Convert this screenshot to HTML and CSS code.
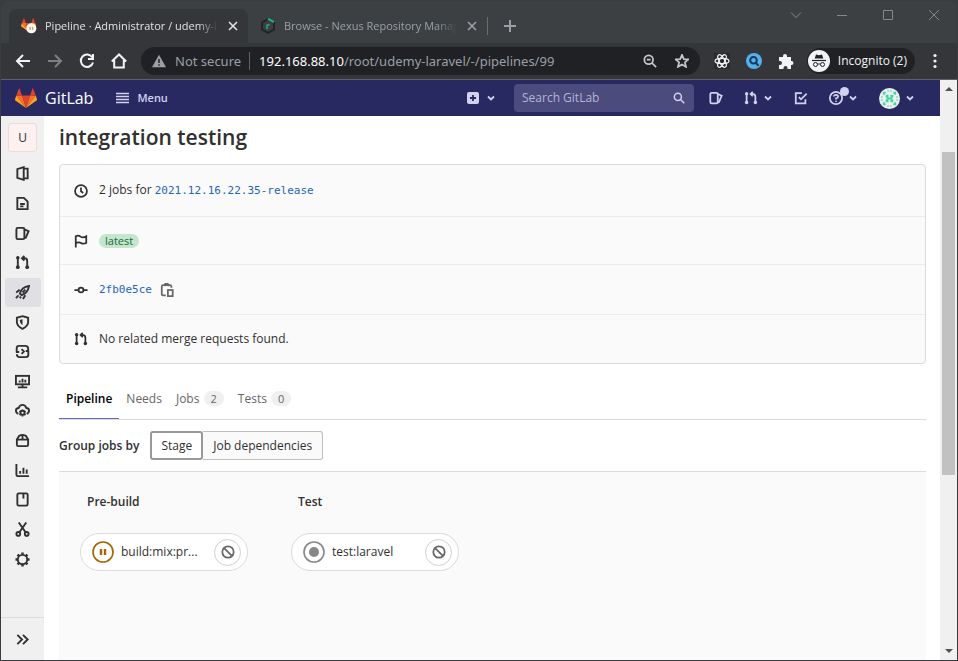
FILE: index.html
```html
<!DOCTYPE html>
<html lang="en">
<head>
<meta charset="utf-8">
<meta name="viewport" content="width=device-width, initial-scale=1">
<title>Pipeline · Administrator / udemy-laravel</title>
<link rel="stylesheet" href="styles.css">
</head>
<body>
<svg class="sprite" aria-hidden="true">
  <symbol id="tanuki" viewBox="0 0 22 20"><path fill="#e24329" d="M11 20 7 7.500h8z"/><path fill="#fc6d26" d="M11 20 7 7.500H1.300zM11 20l4-12.500h5.700z"/><path fill="#fca326" d="M1.300 7.500 0 11.300q-.2.700.4 1.200L11 20zM20.700 7.500l1.300 3.800q.2.700-.4 1.200L11 20z"/><path fill="#e24329" d="M1.300 7.500H7L4.500.400q-.3-.6-.6 0zM20.700 7.500H15l2.500-7.100q.3-.6.600 0z"/></symbol>
  <symbol id="chevron" viewBox="0 0 10 10"><path d="m2 3.500 3 3 3-3" stroke-width="1.800"/></symbol>
  <symbol id="close" viewBox="0 0 10 10"><path d="m1 1 8 8M9 1 1 9" stroke-width="1.600"/></symbol>
  <symbol id="project" viewBox="0 0 16 16"><path d="M9.300 1.200v13.600L2.500 12.700V3.300zM9.300 2.800h4.200v10.400H9.300"/></symbol>
  <symbol id="document" viewBox="0 0 16 16"><path d="M2.500 2h7l4 4v8h-11zM5.500 8.500h5M5.500 11h3.500"/></symbol>
  <symbol id="issues" viewBox="0 0 16 16"><rect x="1.500" y="2" width="8.500" height="12" rx="1.500"/><path d="m10 3.500 4.500 2-3 7-1.500.5"/></symbol>
  <symbol id="merge" viewBox="0 0 16 16"><path d="M3 3v10M8 3.500h2.500q2.500 0 2.500 3V13M10 1 7.500 3.500 10 6"/><g fill="currentColor" stroke="none"><circle cx="3" cy="3" r="1.900"/><circle cx="3" cy="13" r="2"/><circle cx="13" cy="13" r="2"/></g></symbol>
  <symbol id="rocket" viewBox="0 0 16 16"><path d="M5.200 9Q7 2.500 15 1q-1.500 8-8 9.800zM5 5 1.300 8M3.800 11 1 14M11 11l-2.500 4M6.500 12.500 5 14M8 8l3-3"/></symbol>
  <symbol id="shield" viewBox="0 0 16 16"><path d="M8 1.300 14 3v4.500q0 4.500-6 7.200-6-2.700-6-7.200V3z"/><path d="M8 4.500v6.500Q5 9 5 5.300z" fill="currentColor" stroke="none"/></symbol>
  <symbol id="deploy" viewBox="0 0 16 16"><path d="M1.800 9V4.500Q1.800 2 4.300 2H11q3 0 3 3v1.500M14.200 7v4.500q0 2.500-2.500 2.500H5q-3 0-3-3M1 8.500h3.500M11.500 7.500H15M7 5.500 9.500 8 7 10.500"/></symbol>
  <symbol id="monitor" viewBox="0 0 16 16"><rect x="1" y="2" width="14" height="9"/><path d="M3 14.200h10M8 11v3M5 7v2M8 5v4M11 6v3"/></symbol>
  <symbol id="cloud" viewBox="0 0 16 16"><path d="M3.500 11.500Q1 10.500 1 8q0-2.500 3-2.700Q5 2 8 2t4 3.300Q15 5.500 15 8t-2.500 3.500"/><circle cx="8" cy="10.500" r="2.200"/><path d="M8 7v1M8 13v1.500M4.800 8.500l1 .8M10.200 12l1 .8M11.200 8.500l-1 .8M5.800 12l-1 .8"/></symbol>
  <symbol id="package" viewBox="0 0 16 16"><path d="M2 7v5.500q0 1.500 1.500 1.500h9q1.500 0 1.500-1.500V7zM2 7l2.500-4Q8 1 11.500 3L14 7M8 2v4"/></symbol>
  <symbol id="chart" viewBox="0 0 16 16"><path d="M1.500 1v11.500q0 1.500 1.500 1.500h12M5.500 8.500v3M9 5v6.500M12.500 7v4.500"/></symbol>
  <symbol id="book" viewBox="0 0 16 16"><rect x="2.500" y="1.500" width="11" height="13" rx="1.500"/><path d="M9 2v5"/></symbol>
  <symbol id="scissors" viewBox="0 0 16 16"><path d="m4 .5 7.500 10.700M12 .5 4.500 11.200"/><circle cx="3.500" cy="12.700" r="2"/><circle cx="12.500" cy="12.700" r="2"/></symbol>
  <symbol id="gear" viewBox="0 0 16 16"><circle cx="8" cy="8" r="5"/><path stroke-width="2.600" d="M8 .5v2.200M8 13.300v2.200M.5 8h2.200M13.300 8h2.200M2.700 2.700l1.500 1.500M11.800 11.800l1.500 1.500M13.300 2.700l-1.500 1.500M4.200 11.800l-1.500 1.500"/></symbol>
  <symbol id="double" viewBox="0 0 16 16"><path d="m2.500 3 5 5-5 5M8.500 3l5 5-5 5"/></symbol>
  <symbol id="clock" viewBox="0 0 16 16"><circle cx="8" cy="8" r="6.800"/><path d="M8 4v4.300l2.500 2"/></symbol>
  <symbol id="flag" viewBox="0 0 16 16"><path d="M2 15.500V2.500Q5 1 7.500 3t6.500-.3v7.500q-3.500 1.600-6 0T2 10.500"/></symbol>
  <symbol id="commit" viewBox="0 0 16 16"><circle cx="8" cy="8" r="2.800"/><path d="M.5 8H5M11 8h4.500"/></symbol>
  <symbol id="copy" viewBox="0 0 16 16"><path d="M6.500 14H3.500Q2 14 2 12.500V4q0-1.500 1.500-1.500h8Q13 2.500 13 4v1.500M5 3.500 6 1h3l1 2.500"/><rect x="9" y="8" width="5.500" height="7"/></symbol>
  <symbol id="cancel" viewBox="0 0 16 16"><circle cx="8" cy="8" r="6.500"/><path d="m3.500 3.500 9 9"/></symbol>
  <symbol id="search" viewBox="0 0 16 16"><circle cx="6.500" cy="6.500" r="4.700"/><path d="m10 10 5 5"/></symbol>
  <symbol id="zoomout" viewBox="0 0 16 16"><circle cx="6.500" cy="6.500" r="5"/><path d="m10 10 5 5M4.300 6.500h4.400"/></symbol>
</svg>

<div class="window">
  <div class="tabstrip">
    <div class="tab tab-active">
      <svg class="favicon" viewBox="0 0 17 17"><svg width="16" height="14.500"><use href="#tanuki"/></svg><circle cx="11" cy="11" r="5.300" fill="#fff"/><path d="M9.700 9.300v3.400M12.300 9.300v3.400" stroke="#f29a4a" stroke-width="1.500"/></svg>
      <span class="tab-title">Pipeline · Administrator / udemy-laravel</span>
      <button class="tab-close" aria-label="Close tab"><svg class="icon icon-xs"><use href="#close"/></svg></button>
    </div>
    <div class="tab">
      <svg class="favicon" viewBox="0 0 16 16" fill="none"><path d="M8 1.200 14 4.500v7L8 14.800 2 11.500v-7z" stroke="#20242b" stroke-width="2"/><path d="m8 .8 6 3.400" stroke="#21b573" stroke-width="2"/><path d="M7 11V6.500M7 8q.5-1.500 2.500-1.300" stroke="#21b573" stroke-width="1.400"/></svg>
      <span class="tab-title">Browse - Nexus Repository Manager</span>
      <button class="tab-close" aria-label="Close tab"><svg class="icon icon-xs"><use href="#close"/></svg></button>
    </div>
    <button class="new-tab" aria-label="New tab"><svg class="icon icon-sm" viewBox="0 0 12 12"><path d="M6 0v12M0 6h12" stroke-width="2"/></svg></button>
    <div class="window-controls">
      <button aria-label="Search tabs"><svg class="icon icon-sm" viewBox="0 0 12 12"><path d="m1 3.500 5 5 5-5" stroke-width="1"/></svg></button>
      <button aria-label="Minimize"><svg class="icon icon-sm" viewBox="0 0 12 12"><path d="M1 6.500h10" stroke-width="1"/></svg></button>
      <button aria-label="Maximize"><svg class="icon icon-sm" viewBox="0 0 12 12"><path d="M1.500 1.500h9v9h-9z" stroke-width="1"/></svg></button>
      <button aria-label="Close"><svg class="icon icon-sm" viewBox="0 0 12 12"><path d="m1 1 10 10M11 1 1 11" stroke-width="1"/></svg></button>
    </div>
  </div>

  <div class="toolbar">
    <button aria-label="Back"><svg class="icon icon-lg" viewBox="0 0 16 16"><path d="M15 8H2M8 2 2 8l6 6" stroke-width="2"/></svg></button>
    <button class="disabled" aria-label="Forward"><svg class="icon icon-lg" viewBox="0 0 16 16"><path d="M1 8h13M8 2l6 6-6 6" stroke-width="2"/></svg></button>
    <button aria-label="Reload"><svg class="icon icon-lg" viewBox="0 0 16 16"><path d="M13.200 4.300A6.200 6.200 0 1 0 14 9.500M14 1v5H9" stroke-width="2"/></svg></button>
    <button aria-label="Home"><svg class="icon icon-lg" viewBox="0 0 16 16"><path d="M.8 8.500 8 1.500l7.200 7M3.200 7v7.500h9.600V7" stroke-width="2"/></svg></button>
    <div class="address">
      <svg class="icon-md" viewBox="0 0 14 14"><path d="M7 .8 14 13.200H0z" fill="#9aa0a6"/><path d="M7 5v4M7 10.200v1.500" stroke="#202124" stroke-width="1.500"/></svg>
      <span class="security">Not secure</span>
      <span class="url"><b>192.168.88.10</b>/root/udemy-laravel/-/pipelines/99</span>
      <button aria-label="Zoom"><svg class="icon icon-md"><use href="#zoomout"/></svg></button>
      <button aria-label="Bookmark"><svg class="icon icon-md" viewBox="0 0 16 16"><path d="m8 1 2.100 4.800 5.200.4-4 3.400 1.300 5.100L8 12l-4.600 2.700 1.300-5.100-4-3.400 5.200-.4z"/></svg></button>
    </div>
    <div class="extensions">
      <button aria-label="React tools"><svg class="icon icon-lg" viewBox="0 0 16 16"><rect width="16" height="16" fill="#292a2d" stroke="none"/><g stroke-width="1.200"><ellipse cx="8" cy="8" rx="7" ry="2.700"/><ellipse cx="8" cy="8" rx="7" ry="2.700" transform="rotate(60 8 8)"/><ellipse cx="8" cy="8" rx="7" ry="2.700" transform="rotate(120 8 8)"/></g></svg></button>
      <button aria-label="Search extension"><svg class="icon icon-lg" viewBox="0 0 16 16"><circle cx="8" cy="8" r="8" fill="#55b0eb" stroke="none"/><circle cx="7.500" cy="7.300" r="3.300" stroke="#17395a"/><path d="m10 10 2.500 2.800" stroke="#17395a"/></svg></button>
      <button aria-label="Extensions"><svg class="icon-lg" viewBox="0 0 16 16"><path fill="#f1f3f4" d="M1 4h4V3a2 2 0 0 1 4 0v1h4v4h.5a2 2 0 0 1 0 4H13v4H9.500v-1a2 2 0 0 0-4 0v1H1v-4h1a2 2 0 0 0 0-4H1z"/></svg></button>
    </div>
    <button class="incognito"><svg class="incognito-mark" viewBox="0 0 22 22" fill="none" stroke="#202124"><circle cx="11" cy="11" r="11" fill="#f1f3f4" stroke="none"/><path fill="#202124" stroke="none" d="m8 4.500 3 .7 3-.7 1.300 4H6.700z"/><path d="M4 10.500h14" stroke-width="1.200"/><circle cx="7.500" cy="14.500" r="2"/><circle cx="14.500" cy="14.500" r="2"/><path d="M9.500 14h3"/></svg>Incognito (2)</button>
    <button aria-label="Browser menu"><svg class="icon-lg" viewBox="0 0 16 16" fill="#f1f3f4"><circle cx="8" cy="2.500" r="1.600"/><circle cx="8" cy="8" r="1.600"/><circle cx="8" cy="13.500" r="1.600"/></svg></button>
  </div>

  <div class="viewport">
    <div class="page">
      <header class="navbar">
        <a class="brand" href="#"><svg class="tanuki"><use href="#tanuki"/></svg>GitLab</a>
        <button class="menu"><svg class="icon icon-md" viewBox="0 0 14 14"><path d="M0 2.500h13M0 5.500h13M0 8.500h13M0 11.500h13" stroke-width="1.400"/></svg>Menu</button>
        <button class="nav-create" aria-label="Create new"><svg class="icon-sm" viewBox="0 0 12 12"><rect width="12" height="12" rx="2" fill="#d1d1f0"/><path d="M6 3v6M3 6h6" stroke="#292961" stroke-width="1.800"/></svg><svg class="icon icon-xs"><use href="#chevron"/></svg></button>
        <div class="search">
          <input type="search" placeholder="Search GitLab" aria-label="Search GitLab">
          <svg class="icon icon-sm"><use href="#search"/></svg>
        </div>
        <div class="nav-links">
          <button aria-label="Issues"><svg class="icon icon-md"><use href="#issues"/></svg></button>
          <button aria-label="Merge requests"><svg class="icon icon-md"><use href="#merge"/></svg><svg class="icon icon-xs"><use href="#chevron"/></svg></button>
          <button aria-label="To-Do List"><svg class="icon icon-md" viewBox="0 0 16 16"><path d="M9 2.500H2V14h11V9.500M5.500 7 8 9.500 14.500 3"/></svg></button>
          <button class="help" aria-label="Help"><svg class="icon icon-md" viewBox="0 0 16 16"><circle cx="8" cy="8" r="7"/><path d="M5.500 6.300Q5.700 4.300 8 4.300t2.400 2Q10.400 8 8 8.500v1.200M8 11v1.500"/></svg><svg class="icon icon-xs"><use href="#chevron"/></svg></button>
          <button class="user" aria-label="Profile"><svg class="avatar" viewBox="0 0 22 22"><circle cx="11" cy="11" r="11" fill="#eee"/><g fill="#3ed7a2"><path d="M7 7h3v3h2V7h3v3h-1v2h1v3h-3v-3h-2v3H7v-3h1v-2H7zM4 4h3v2H6v1H4zM15 4h3v3h-2V6h-1zM4 15h2v1h1v2H4zM16 15h2v3h-3v-2h1zM9 2h1v2H9zM12 2h1v2h-1zM9 18h1v2H9zM12 18h1v2h-1zM2 9h2v1H2zM18 9h2v1h-2zM2 12h2v1H2zM18 12h2v1h-2z"/></g></svg><svg class="icon icon-xs"><use href="#chevron"/></svg></button>
        </div>
      </header>

      <div class="body">
        <nav class="sidebar" aria-label="Project">
          <a class="project-avatar" href="#">U</a>
          <ul>
            <li><a href="#" aria-label="Project information"><svg class="icon icon-nav"><use href="#project"/></svg></a></li>
            <li><a href="#" aria-label="Repository"><svg class="icon icon-nav"><use href="#document"/></svg></a></li>
            <li><a href="#" aria-label="Issues"><svg class="icon icon-nav"><use href="#issues"/></svg></a></li>
            <li><a href="#" aria-label="Merge requests"><svg class="icon icon-nav"><use href="#merge"/></svg></a></li>
            <li><a class="active" href="#" aria-label="CI/CD"><svg class="icon icon-nav"><use href="#rocket"/></svg></a></li>
            <li><a href="#" aria-label="Security"><svg class="icon icon-nav"><use href="#shield"/></svg></a></li>
            <li><a href="#" aria-label="Deployments"><svg class="icon icon-nav"><use href="#deploy"/></svg></a></li>
            <li><a href="#" aria-label="Monitor"><svg class="icon icon-nav"><use href="#monitor"/></svg></a></li>
            <li><a href="#" aria-label="Infrastructure"><svg class="icon icon-nav"><use href="#cloud"/></svg></a></li>
            <li><a href="#" aria-label="Packages"><svg class="icon icon-nav"><use href="#package"/></svg></a></li>
            <li><a href="#" aria-label="Analytics"><svg class="icon icon-nav"><use href="#chart"/></svg></a></li>
            <li><a href="#" aria-label="Wiki"><svg class="icon icon-nav"><use href="#book"/></svg></a></li>
            <li><a href="#" aria-label="Snippets"><svg class="icon icon-nav"><use href="#scissors"/></svg></a></li>
            <li><a href="#" aria-label="Settings"><svg class="icon icon-nav"><use href="#gear"/></svg></a></li>
          </ul>
          <button class="expand" aria-label="Expand sidebar"><svg class="icon icon-nav"><use href="#double"/></svg></button>
        </nav>

        <main>
          <h1>integration testing</h1>
          <div class="info">
            <div class="info-row"><svg class="icon icon-md"><use href="#clock"/></svg><span>2 jobs for <a class="ref" href="#">2021.12.16.22.35-release</a></span></div>
            <div class="info-row"><svg class="icon icon-md"><use href="#flag"/></svg><span class="badge-latest">latest</span></div>
            <div class="info-row"><svg class="icon icon-md"><use href="#commit"/></svg><a class="ref" href="#">2fb0e5ce</a><button class="copy" aria-label="Copy commit SHA"><svg class="icon icon-md"><use href="#copy"/></svg></button></div>
            <div class="info-row"><svg class="icon icon-md"><use href="#merge"/></svg><span>No related merge requests found.</span></div>
          </div>

          <nav class="tabs" aria-label="Pipeline views">
            <a class="current" href="#">Pipeline</a>
            <a href="#">Needs</a>
            <a href="#">Jobs <span class="count">2</span></a>
            <a href="#">Tests <span class="count">0</span></a>
          </nav>

          <div class="grouping">
            <span class="grouping-label" id="group-label">Group jobs by</span>
            <div class="segmented" role="group" aria-labelledby="group-label">
              <button class="selected">Stage</button>
              <button>Job dependencies</button>
            </div>
          </div>

          <div class="graph">
            <section class="stage">
              <h2>Pre-build</h2>
              <div class="job">
                <svg class="status" viewBox="0 0 22 22" fill="none" stroke="#ab6100"><circle cx="11" cy="11" r="10" stroke-width="1.600"/><path d="M9 8v6M13 8v6" stroke-width="2.400"/></svg>
                <a href="#">build:mix:pr...</a>
                <button class="cancel" aria-label="Cancel job"><svg class="icon icon-md"><use href="#cancel"/></svg></button>
              </div>
            </section>
            <section class="stage">
              <h2>Test</h2>
              <div class="job">
                <svg class="status" viewBox="0 0 22 22" fill="none" stroke="#868686"><circle cx="11" cy="11" r="10" stroke-width="1.600"/><circle cx="11" cy="11" r="5" fill="#868686" stroke="none"/></svg>
                <a href="#">test:laravel</a>
                <button class="cancel" aria-label="Cancel job"><svg class="icon icon-md"><use href="#cancel"/></svg></button>
              </div>
            </section>
          </div>
        </main>
      </div>
    </div>
    <div class="scrollbar" aria-hidden="true">
      <svg class="arrow" viewBox="0 0 8 4"><path d="M0 4h8L4 0z"/></svg>
      <div class="track"><div class="thumb"></div></div>
      <svg class="arrow" viewBox="0 0 8 4"><path d="M0 0h8L4 4z"/></svg>
    </div>
  </div>
</div>
</body>
</html>
```

FILE: styles.css
```css
* { box-sizing: border-box; }

body {
  margin: 0;
  background: #3c3c3e;
  color: #303030;
  font: 12px/18px "Open Sans", "Noto Sans", sans-serif;
}

button {
  display: inline-flex;
  align-items: center;
  justify-content: center;
  padding: 0;
  border: 0;
  background: none;
  color: inherit;
  font: inherit;
}

a { color: inherit; text-decoration: none; }
svg { flex: none; display: block; }

.sprite { position: absolute; width: 0; height: 0; }

.icon { fill: none; stroke: currentColor; stroke-width: 2; }
.icon-xs { width: 10px; height: 10px; }
.icon-sm { width: 12px; height: 12px; }
.icon-md { width: 14px; height: 14px; }
.icon-nav { width: 15px; height: 15px; }
.icon-lg { width: 16px; height: 16px; }

.window {
  display: flex;
  flex-direction: column;
  height: 100vh;
  padding: 1px;
}

/* Browser tab strip */
.tabstrip {
  display: flex;
  align-items: flex-end;
  height: 42px;
  padding-left: 8px;
  border-radius: 8px 8px 0 0;
  background: #3c4043;
  color: #9aa0a6;
  font-size: 11px;
}

.tab {
  display: flex;
  align-items: center;
  width: 239px;
  height: 34px;
  padding: 0 7px 0 12px;
}

.tab-active {
  border-radius: 8px 8px 0 0;
  background: #35363a;
  color: #dfe1e5;
}

.favicon { width: 16px; height: 16px; margin-right: 8px; }

.tab-title {
  flex: 1;
  overflow: hidden;
  white-space: nowrap;
  mask-image: linear-gradient(to right, #000 88%, transparent);
}

.tab-close { width: 16px; margin-left: 7px; }

.new-tab {
  align-self: flex-end;
  width: 44px;
  height: 18px;
  margin-bottom: 8px;
  border-left: 1px solid #6b6e72;
}

.window-controls {
  display: flex;
  align-self: flex-start;
  gap: 34px;
  margin: 8px 17px 0 auto;
  color: #85888b;
}

/* Browser toolbar */
.toolbar {
  display: flex;
  align-items: center;
  gap: 16px;
  height: 37px;
  padding: 0 14px;
  border-bottom: 1px solid #5f6164;
  background: #35363a;
  color: #f1f3f4;
}

.toolbar .disabled { color: #7d7f82; }

.address {
  display: flex;
  flex: 1;
  align-items: center;
  gap: 9px;
  height: 28px;
  margin: 0 -2px;
  padding: 0 11px;
  border-radius: 14px;
  background: #202124;
  color: #9aa0a6;
  font-family: "Noto Sans", "Open Sans", sans-serif;
  font-size: 13px;
}

.security { padding-right: 8px; border-right: 1px solid #5f6368; }
.url { flex: 1; white-space: nowrap; }
.url b { color: #fff; font-weight: 400; }
.address button { margin-left: 9px; color: #c4c7ca; }

.extensions { display: flex; gap: 16px; }

.incognito {
  gap: 8px;
  height: 26px;
  margin: 0 -4px 0 -3px;
  padding: 0 8px 0 1px;
  border-radius: 13px;
  background: #202124;
}

.incognito-mark { width: 22px; height: 22px; }

/* Page area */
.viewport { display: flex; flex: 1; min-height: 0; }

.page {
  display: flex;
  flex: 1;
  flex-direction: column;
  min-width: 0;
  background: #fff;
}

.navbar {
  display: flex;
  align-items: center;
  height: 36px;
  padding: 0 25px 0 14px;
  background: #292961;
  color: #d1d1f0;
}

.brand {
  display: flex;
  align-items: center;
  gap: 8px;
  color: #fff;
  font-size: 16px;
}

.tanuki { width: 22px; height: 20px; }
.menu { gap: 7px; margin-left: 23px; font-size: 11px; font-weight: 600; }
.nav-create { gap: 7px; margin-left: auto; margin-right: 18px; }

.search {
  display: flex;
  align-items: center;
  width: 180px;
  height: 28px;
  padding: 0 9px 0 8px;
  border-radius: 4px;
  background: #4b4b7d;
}

.search input {
  flex: 1;
  min-width: 0;
  padding: 0;
  border: 0;
  background: none;
  color: inherit;
  font: inherit;
}

.search input::placeholder { color: #b4b4d8; opacity: 1; }

.nav-links {
  display: flex;
  align-items: center;
  gap: 21px;
  margin-left: 15px;
}

.nav-links button { position: relative; gap: 5px; }

.help::after {
  position: absolute;
  top: -4px;
  left: 11px;
  width: 9px;
  height: 9px;
  border-radius: 50%;
  background: #d1d1f0;
  content: "";
}

.avatar { width: 21px; height: 21px; }

.body { display: flex; flex: 1; min-height: 0; }

/* Project sidebar */
.sidebar {
  display: flex;
  flex-direction: column;
  width: 43px;
  padding-top: 7px;
  background: #f0f0f0;
}

.project-avatar {
  width: 29px;
  height: 29px;
  margin: 0 auto 7px 7px;
  border: 1px solid #ecdcda;
  border-radius: 3px;
  background: #fcf1ef;
  line-height: 27px;
  text-align: center;
}

.sidebar ul {
  display: flex;
  flex: 1;
  flex-direction: column;
  margin: 0;
  padding: 0 3px 43px 4px;
  list-style: none;
}

.sidebar li { flex: 1; }

.sidebar li a {
  display: flex;
  align-items: center;
  justify-content: center;
  height: 100%;
  padding-right: 1px;
  border-radius: 3px;
}

.sidebar .active { background: #dfdfe4; }
.expand { height: 43px; border-top: 1px solid #dbdbdb; }

/* Pipeline */
main {
  display: flex;
  flex: 1;
  flex-direction: column;
  min-width: 0;
  padding: 7px 14px 0 15px;
}

h1 {
  margin: 0 0 13px;
  font-size: 21px;
  font-weight: 600;
  line-height: 28px;
}

.info {
  display: grid;
  grid-template-rows: 51px 48px 50px 49px;
  border: 1px solid #dbdbdb;
  border-radius: 4px;
  background: #fafafa;
}

.info-row {
  display: flex;
  align-items: center;
  gap: 11px;
  padding: 0 14px;
}

.info-row + .info-row { border-top: 1px solid #ececec; }

.ref { color: #1f64b8; font: 11px/18px "DejaVu Sans Mono", monospace; }
.copy { margin-left: -3px; color: #666; }

.badge-latest {
  padding: 0 6px;
  border-radius: 7px;
  background: #c3e6cd;
  color: #24663b;
  font-size: 11px;
  line-height: 14px;
}

.tabs {
  display: flex;
  margin-top: 14px;
  border-bottom: 1px solid #dbdbdb;
  color: #666;
}

.tabs a { padding: 12px 7px 10px; }

.tabs .current {
  border-bottom: 1px solid #6666c4;
  color: #000;
  font-weight: 600;
}

.count {
  display: inline-block;
  margin-left: 1px;
  padding: 0 7px;
  border-radius: 8px;
  background: #f0f0f0;
  font-size: 11px;
  line-height: 15px;
}

.grouping {
  display: flex;
  align-items: center;
  gap: 11px;
  padding: 11px 0;
}

.grouping-label { font-weight: 600; }
.segmented { display: flex; }

.segmented button {
  height: 29px;
  padding: 0 10px;
  border: 1px solid #bfbfbf;
  border-left: 0;
  border-radius: 0 3px 3px 0;
  background: #fafafa;
}

.segmented .selected {
  padding: 0 9px;
  border: 2px solid #999;
  border-radius: 3px;
  background: #fff;
}

.graph {
  display: flex;
  flex: 1;
  gap: 43px;
  padding: 21px;
  border-top: 1px solid #dbdbdb;
  background: #fafafa;
}

.stage { width: 168px; }

h2 {
  margin: 0 0 22px;
  padding-left: 7px;
  font-size: 12px;
  font-weight: 600;
  line-height: 18px;
}

.job {
  display: flex;
  align-items: center;
  gap: 7px;
  height: 38px;
  padding: 0 6px 0 11px;
  border: 1px solid #dbdbdb;
  border-radius: 19px;
  background: #fff;
}

.job a { flex: 1; white-space: nowrap; }

.status { width: 22px; height: 22px; }

.cancel {
  width: 27px;
  height: 27px;
  border: 1px solid #cfcfcf;
  border-radius: 50%;
  color: #666;
}

/* Scrollbar */
.scrollbar {
  display: flex;
  flex-direction: column;
  align-items: center;
  width: 17px;
  padding: 7px 0;
  background: #f0f0f0;
}

.arrow { width: 8px; height: 4px; fill: #505050; }
.track { flex: 1; width: 13px; padding: 61px 0 0; }
.thumb { height: 65%; background: #c1c1c1; }
```
